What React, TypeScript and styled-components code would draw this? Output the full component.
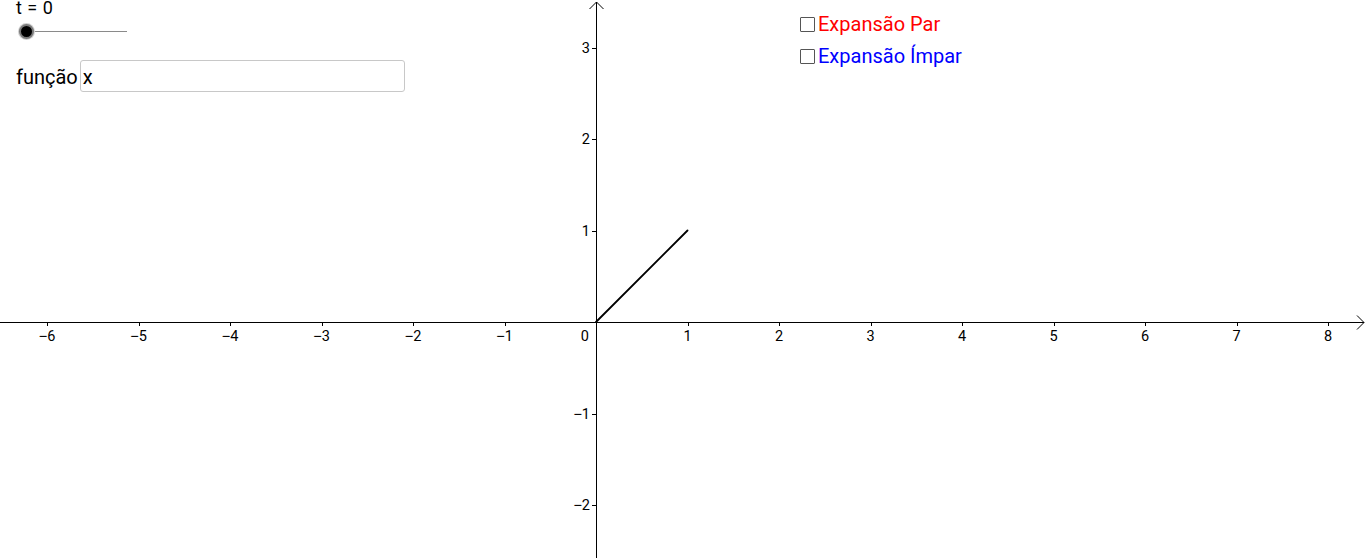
import React from 'react'
import styled, { createGlobalStyle } from 'styled-components'

const GlobalStyle = createGlobalStyle`
  html, body {
    margin: 0;
    padding: 0;
    background: #ffffff;
    font-family: Roboto, "Liberation Sans", sans-serif;
  }
`

const W = 1366
const H = 558
const OX = 596
const OY = 322
const U = 91.5

const xs = [-6, -5, -4, -3, -2, -1, 1, 2, 3, 4, 5, 6, 7, 8]
const ys = [-2, -1, 1, 2, 3]

// Roboto's minus is short, the reference uses a wider one
const label = (n: number) =>
  n < 0 ? (
    <>
      <tspan fontFamily="'Liberation Sans', sans-serif">{'\u2212'}</tspan>
      {Math.abs(n)}
    </>
  ) : (
    String(n)
  )

function Graph() {
  return (
    <Plot width={W} height={H} viewBox={`0 0 ${W} ${H}`}>
      <g stroke="#000" strokeWidth={1} fill="none">
        <line x1={0} y1={OY + 0.5} x2={W - 2} y2={OY + 0.5} />
        <polyline points={`${W - 9},${OY - 6.5} ${W - 2},${OY + 0.5} ${W - 9},${OY + 7.5}`} />
        <line x1={OX + 0.5} y1={2} x2={OX + 0.5} y2={H} />
        <polyline points={`${OX - 6.5},9 ${OX + 0.5},2 ${OX + 7.5},9`} />
        {xs.map((n) => {
          const x = Math.round(OX + n * U) + 0.5
          return <line key={'tx' + n} x1={x} y1={OY} x2={x} y2={OY + 4} />
        })}
        {ys.map((n) => {
          const y = Math.round(OY - n * U) + 0.5
          return <line key={'ty' + n} x1={OX - 4} y1={y} x2={OX} y2={y} />
        })}
      </g>
      <g fontFamily="Roboto, 'Liberation Sans', sans-serif" fontSize={14.5} fill="#000">
        {xs.map((n) => (
          <text key={'lx' + n} x={OX + n * U} y={OY + 19} textAnchor="middle">
            {label(n)}
          </text>
        ))}
        {ys.map((n) => (
          <text key={'ly' + n} x={OX - 6} y={OY - n * U + 5} textAnchor="end">
            {label(n)}
          </text>
        ))}
        <text x={OX - 7} y={OY + 19} textAnchor="end">0</text>
      </g>
      <line x1={OX} y1={OY} x2={OX + U} y2={OY - U} stroke="#000" strokeWidth={1.8} strokeLinecap="round" />
    </Plot>
  )
}

export default function App() {
  return (
    <>
      <GlobalStyle />
      <Canvas>
        <Graph />
        <SliderBox>
          <SliderLabel>t = 0</SliderLabel>
          <Track>
            <Knob />
          </Track>
        </SliderBox>
        <InputRow>
          <InputLabel>função</InputLabel>
          <TextField>x</TextField>
        </InputRow>
        <CheckList>
          <CheckItem $color="#ff0000">
            <Box />
            Expansão Par
          </CheckItem>
          <CheckItem $color="#0000ff">
            <Box />
            Expansão Ímpar
          </CheckItem>
        </CheckList>
      </Canvas>
    </>
  )
}

const Canvas = styled.div`
  position: relative;
  width: ${W}px;
  height: ${H}px;
  overflow: hidden;
  background: #ffffff;
`

const Plot = styled.svg`
  display: block;
  position: absolute;
  left: 0;
  top: 0;
`

const SliderBox = styled.div`
  position: absolute;
  left: 16px;
  top: 0;
  display: flex;
  flex-direction: column;
`

const SliderLabel = styled.span`
  font-size: 18px;
  line-height: 16px;
  word-spacing: 1px;
  color: #000;
`

const Track = styled.div`
  position: relative;
  margin-top: 15px;
  margin-left: 10px;
  width: 101px;
  height: 1px;
  background: #8a8a8a;
`

const Knob = styled.div`
  position: absolute;
  left: -7px;
  top: -7px;
  width: 11px;
  height: 11px;
  border-radius: 50%;
  background: #000;
  border: 2px solid #7a7a7a;
  box-shadow: 0 0 0 1px #cfcfcf;
`

const InputRow = styled.div`
  position: absolute;
  left: 16px;
  top: 60px;
  display: flex;
  align-items: flex-start;
`

const InputLabel = styled.span`
  font-size: 20px;
  line-height: 34px;
  color: #000;
  margin-right: 2px;
`

const TextField = styled.div`
  box-sizing: border-box;
  width: 325px;
  height: 32px;
  border: 1px solid #c8c8c8;
  border-radius: 3px;
  padding: 1px 2px 0;
  font-size: 20px;
  line-height: 30px;
  color: #000;
`

const CheckList = styled.div`
  position: absolute;
  left: 800px;
  top: 13px;
  display: flex;
  flex-direction: column;
  gap: 10px;
`

const CheckItem = styled.label<{ $color: string }>`
  display: flex;
  align-items: center;
  gap: 3px;
  font-size: 20px;
  line-height: 22px;
  color: ${(p) => p.$color};
`

const Box = styled.span`
  box-sizing: border-box;
  width: 15px;
  height: 15px;
  border: 1px solid #555;
  border-radius: 1px;
  background: #fff;
`
